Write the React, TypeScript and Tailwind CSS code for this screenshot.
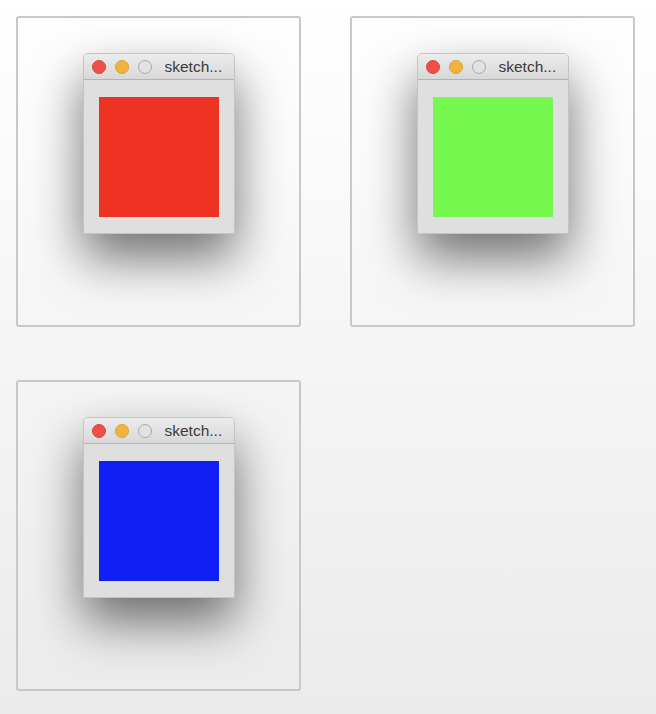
import React from "react";

function Win({ color }: { color: string }) {
  return (
    <div className="w-[152px] rounded-t-[5px] border border-[#c4c4c4] bg-[#dfdfdf] shadow-[0_24px_50px_rgba(0,0,0,0.55)]">
      <div className="flex h-[26px] items-center rounded-t-[4px] border-b border-[#b3b3b3] bg-linear-to-b from-[#ececec] to-[#d8d8d8] pl-[8px]">
        <span className="h-[14px] w-[14px] rounded-full border border-[#d9423c] bg-[#ee5048]" />
        <span className="ml-[9px] h-[14px] w-[14px] rounded-full border border-[#dea231] bg-[#f1b33d]" />
        <span className="ml-[9px] h-[14px] w-[14px] rounded-full border-[1.5px] border-[#a8a8a8] bg-[#e2e2e2]" />
        <span className="ml-[13px] text-[15.5px] leading-none text-[#3b3b3b] whitespace-nowrap" style={{ fontFamily: '"Liberation Sans", Arial, sans-serif' }}>
          sketch...
        </span>
      </div>
      <div className="px-[15px] pt-[17px] pb-[16px]">
        <div className="h-[120px] w-[120px]" style={{ backgroundColor: color }} />
      </div>
    </div>
  );
}

function Box({ color }: { color: string }) {
  return (
    <div className="flex h-[311px] w-[285px] items-start justify-center rounded-[3px] border-2 border-[#c8c8c8] pt-[35px]">
      <Win color={color} />
    </div>
  );
}

export default function App() {
  return (
    <div className="min-h-[714px] w-full bg-linear-to-b from-[#ffffff] to-[#ebebeb] pl-[16px] pt-[16px]">
      <div className="grid grid-cols-[285px_285px] gap-x-[49px] gap-y-[53px]">
        <Box color="#ee3224" />
        <Box color="#76f84f" />
        <Box color="#1020f5" />
      </div>
    </div>
  );
}
